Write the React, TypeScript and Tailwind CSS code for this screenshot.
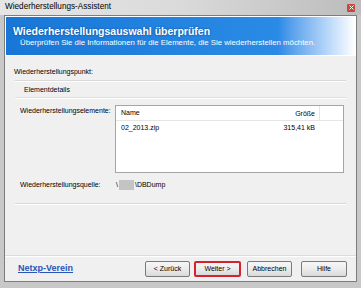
import React from "react";

function Button({ label, primary, className }: { label: string; primary?: boolean; className?: string }) {
  return (
    <div
      className={
        "flex h-[16px] w-[45px] items-center justify-center rounded-[2px] bg-gradient-to-b from-[#f6f6f6] via-[#ececec] to-[#d9d9d9] text-[7px] text-black " +
        (primary ? "border-2 border-[#d2232f] " : "border border-[#7a7a7a] ") +
        (className ?? "")
      }
    >
      {label}
    </div>
  );
}

export default function App() {
  return (
    <div className="flex h-[288px] w-[361px] flex-col overflow-hidden bg-[#c8c8c8] font-['Liberation_Sans',Arial,sans-serif]">
      {/* Title bar */}
      <div className="flex h-[15px] items-center justify-between bg-gradient-to-r from-[#e6e6e6] via-[#dadada] to-[#bcbcbc] pl-[5px] pr-[6px]">
        <span className="text-[8.2px] leading-none text-black">Wiederherstellungs-Assistent</span>
        <div className="flex h-[8px] w-[8px] items-center justify-center rounded-[1px] bg-[#c9473a]">
          <svg width="5" height="5" viewBox="0 0 5 5">
            <path d="M0.5 0.5L4.5 4.5M4.5 0.5L0.5 4.5" stroke="#fff" strokeWidth="1" />
          </svg>
        </div>
      </div>

      {/* Window body */}
      <div className="mx-[4px] mb-[6px] flex flex-1 flex-col border border-[#7d7d7d] bg-white">
        {/* Header banner */}
        <div className="mx-[1px] mt-[1px] flex h-[38px] flex-col justify-center bg-gradient-to-r from-[#1877d6] via-[#2a8be6] via-[78%] to-[#ffffff] pl-[7px]">
          <div className="text-[10.5px] font-bold leading-[12px] text-white [text-shadow:0_0_2px_#0b3f80]">
            Wiederherstellungsauswahl überprüfen
          </div>
          <div className="pl-[7px] text-[7.8px] leading-[11px] text-white">
            Überprüfen Sie die Informationen für die Elemente, die Sie wiederherstellen möchten.
          </div>
        </div>

        <div className="mt-[1px] flex flex-1 flex-col bg-[#f0f0f0] text-[7px] text-black">
          <div className="mt-[11px] pl-[9px] leading-[10px]">Wiederherstellungspunkt:</div>

          <div className="mx-[10px] mt-[3px] border-t border-b border-t-[#d8d8d8] border-b-white" />

          <div className="mt-[3px] pl-[19px] leading-[10px]">Elementdetails</div>
          <div className="mx-[10px] mt-[2px] border-t border-b border-t-[#dedede] border-b-white" />

          <div className="mt-[6px] flex">
            <div className="w-[110px] pl-[15px] pt-[1px] leading-[10px]">Wiederherstellungselemente:</div>
            <div className="flex h-[68px] w-[229px] flex-col border border-[#a5a5a5] bg-white">
              <div className="flex h-[15px] items-center border-b border-[#e5e5e5]">
                <span className="flex-1 pl-[5px]">Name</span>
                <span className="w-[60px] border-r border-[#e5e5e5] pr-[4px] text-right leading-[15px]">Größe</span>
                <span className="w-[23px]" />
              </div>
              <div className="flex h-[15px] items-center">
                <span className="flex-1 pl-[5px]">02_2013.zip</span>
                <span className="w-[60px] pr-[5px] text-right">315,41 kB</span>
                <span className="w-[23px]" />
              </div>
            </div>
          </div>

          <div className="mt-[7px] flex items-center">
            <div className="w-[111px] pl-[15px] leading-[10px]">Wiederherstellungsquelle:</div>
            <span>\</span>
            <span className="mx-[1px] h-[10px] w-[15px] bg-[#c4c4c4]" />
            <span>\DBDump</span>
          </div>

          <div className="mx-[10px] mt-[12px] border-t border-b border-t-[#d8d8d8] border-b-white" />

          <div className="flex-1" />

          <div className="border-t border-b border-t-[#dcdcdc] border-b-white" />
          <div className="flex h-[24px] items-center justify-between pl-[13px] pr-[9px]">
            <span className="text-[9px] font-bold text-[#2a54b8] underline decoration-[#2a54b8]">Netxp-Verein</span>
            <div className="flex items-center">
              <Button label="< Zurück" />
              <Button label="Weiter >" primary className="ml-[4px] w-[47px]" />
              <Button label="Abbrechen" className="ml-[6px]" />
              <Button label="Hilfe" className="ml-[9px] w-[46px]" />
            </div>
          </div>
        </div>
      </div>
    </div>
  );
}
